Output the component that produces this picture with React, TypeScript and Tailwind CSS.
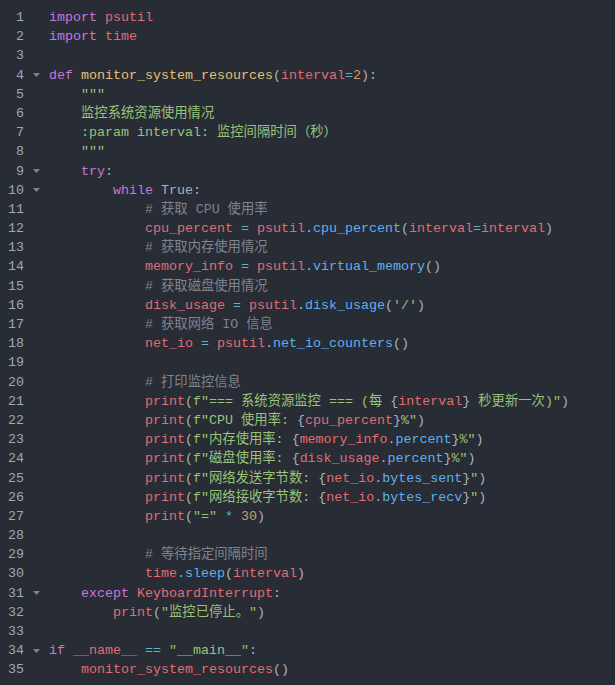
import React from 'react'

type Tok = [string, string]

const C: Record<string, string> = {
  k: 'text-[#c678dd]',
  f: 'text-[#e5c07b]',
  v: 'text-[#e06c75]',
  s: 'text-[#98c379]',
  m: 'text-[#61afef]',
  o: 'text-[#56b6c2]',
  n: 'text-[#d19a66]',
  c: 'text-[#7f848e]',
  p: 'text-[#abb2bf]',
}

const I1 = '    '
const I2 = '        '
const I3 = '            '

// each line: [foldable, tokens]
const lines: [boolean, Tok[]][] = [
  [false, [['import', 'k'], [' ', 'p'], ['psutil', 'v']]],
  [false, [['import', 'k'], [' ', 'p'], ['time', 'v']]],
  [false, []],
  [true, [['def', 'k'], [' ', 'p'], ['monitor_system_resources', 'f'], ['(', 'p'], ['interval', 'v'], ['=', 'o'], ['2', 'n'], ['):', 'p']]],
  [false, [[I1 + '"""', 's']]],
  [false, [[I1 + '监控系统资源使用情况', 's']]],
  [false, [[I1 + ':param interval: 监控间隔时间（秒）', 's']]],
  [false, [[I1 + '"""', 's']]],
  [true, [[I1, 'p'], ['try', 'k'], [':', 'p']]],
  [true, [[I2, 'p'], ['while', 'k'], [' True:', 'p']]],
  [false, [[I3 + '# 获取 CPU 使用率', 'c']]],
  [false, [[I3, 'p'], ['cpu_percent', 'v'], [' ', 'p'], ['=', 'o'], [' ', 'p'], ['psutil', 'v'], ['.', 'p'], ['cpu_percent', 'm'], ['(', 'p'], ['interval', 'v'], ['=', 'o'], ['interval', 'v'], [')', 'p']]],
  [false, [[I3 + '# 获取内存使用情况', 'c']]],
  [false, [[I3, 'p'], ['memory_info', 'v'], [' ', 'p'], ['=', 'o'], [' ', 'p'], ['psutil', 'v'], ['.', 'p'], ['virtual_memory', 'm'], ['()', 'p']]],
  [false, [[I3 + '# 获取磁盘使用情况', 'c']]],
  [false, [[I3, 'p'], ['disk_usage', 'v'], [' ', 'p'], ['=', 'o'], [' ', 'p'], ['psutil', 'v'], ['.', 'p'], ['disk_usage', 'm'], ['(', 'p'], ["'/'", 's'], [')', 'p']]],
  [false, [[I3 + '# 获取网络 IO 信息', 'c']]],
  [false, [[I3, 'p'], ['net_io', 'v'], [' ', 'p'], ['=', 'o'], [' ', 'p'], ['psutil', 'v'], ['.', 'p'], ['net_io_counters', 'm'], ['()', 'p']]],
  [false, []],
  [false, [[I3 + '# 打印监控信息', 'c']]],
  [false, [[I3, 'p'], ['print', 'v'], ['(', 'p'], ['f"=== 系统资源监控 === (每 ', 's'], ['{', 'p'], ['interval', 'v'], ['}', 'p'], [' 秒更新一次)"', 's'], [')', 'p']]],
  [false, [[I3, 'p'], ['print', 'v'], ['(', 'p'], ['f"CPU 使用率: ', 's'], ['{', 'p'], ['cpu_percent', 'v'], ['}', 'p'], ['%"', 's'], [')', 'p']]],
  [false, [[I3, 'p'], ['print', 'v'], ['(', 'p'], ['f"内存使用率: ', 's'], ['{', 'p'], ['memory_info', 'v'], ['.', 'p'], ['percent', 'm'], ['}', 'p'], ['%"', 's'], [')', 'p']]],
  [false, [[I3, 'p'], ['print', 'v'], ['(', 'p'], ['f"磁盘使用率: ', 's'], ['{', 'p'], ['disk_usage', 'v'], ['.', 'p'], ['percent', 'm'], ['}', 'p'], ['%"', 's'], [')', 'p']]],
  [false, [[I3, 'p'], ['print', 'v'], ['(', 'p'], ['f"网络发送字节数: ', 's'], ['{', 'p'], ['net_io', 'v'], ['.', 'p'], ['bytes_sent', 'm'], ['}', 'p'], ['"', 's'], [')', 'p']]],
  [false, [[I3, 'p'], ['print', 'v'], ['(', 'p'], ['f"网络接收字节数: ', 's'], ['{', 'p'], ['net_io', 'v'], ['.', 'p'], ['bytes_recv', 'm'], ['}', 'p'], ['"', 's'], [')', 'p']]],
  [false, [[I3, 'p'], ['print', 'v'], ['(', 'p'], ['"="', 's'], [' ', 'p'], ['*', 'o'], [' ', 'p'], ['30', 'n'], [')', 'p']]],
  [false, []],
  [false, [[I3 + '# 等待指定间隔时间', 'c']]],
  [false, [[I3, 'p'], ['time', 'v'], ['.', 'p'], ['sleep', 'm'], ['(', 'p'], ['interval', 'v'], [')', 'p']]],
  [true, [[I1, 'p'], ['except', 'k'], [' ', 'p'], ['KeyboardInterrupt', 'v'], [':', 'p']]],
  [false, [[I2, 'p'], ['print', 'v'], ['(', 'p'], ['"监控已停止。"', 's'], [')', 'p']]],
  [false, []],
  [true, [['if', 'k'], [' ', 'p'], ['__name__', 'v'], [' ', 'p'], ['==', 'o'], [' ', 'p'], ['"__main__"', 's'], [':', 'p']]],
  [false, [[I1, 'p'], ['monitor_system_resources', 'v'], ['()', 'p']]],
]

function FoldArrow() {
  return (
    <svg width="7" height="4" viewBox="0 0 7 4" className="block">
      <path d="M0 0 L7 0 L3.5 4 Z" fill="#7f848e" />
    </svg>
  )
}

export default function App() {
  return (
    <div
      className="w-[615px] h-[685px] bg-[#282c34] pt-[8px] overflow-hidden text-[13.33px]"
      style={{ fontFamily: '"Liberation Mono", "Noto Sans CJK SC", monospace' }}
    >
      {lines.map(([fold, toks], i) => (
        <div key={i} className="flex items-center h-[19.2px] leading-[19.2px] whitespace-pre">
          <span className="w-[24px] text-right text-[#a0a7b4]">{i + 1}</span>
          <span className="w-[25px] flex items-center pl-[9px]">{fold && <FoldArrow />}</span>
          <span>
            {toks.map(([t, k], j) => (
              <span key={j} className={C[k]}>{t}</span>
            ))}
          </span>
        </div>
      ))}
    </div>
  )
}
